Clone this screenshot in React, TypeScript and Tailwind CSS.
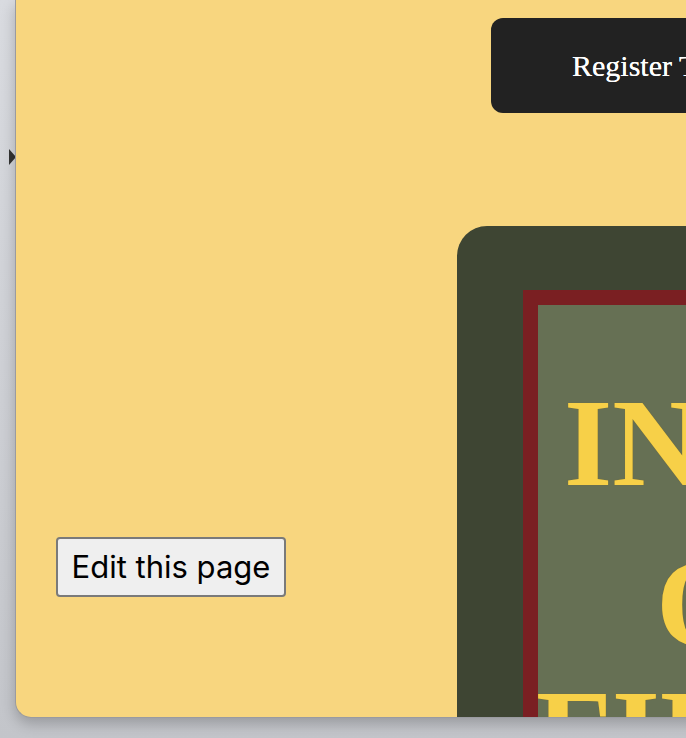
export default function App() {
  return (
    <div className="flex h-[738px] w-[686px] overflow-hidden bg-gradient-to-b from-[#d9dbe0] to-[#c3c5ca]">
      {/* left gutter with the disclosure arrow */}
      <div className="w-[15px] shrink-0 pt-[149px] pl-[9px]">
        <div className="h-0 w-0 border-y-[8px] border-l-[7px] border-y-transparent border-l-[#333]" />
      </div>

      {/* window */}
      <div className="flex h-[718px] w-[1000px] shrink-0 overflow-hidden rounded-bl-[16px] border-b border-l border-[#9a9ba0] bg-[#f8d67f] shadow-[0_6px_14px_rgba(0,0,0,0.22)]">
        {/* left column */}
        <div className="flex w-[441px] shrink-0 flex-col pl-[40px] pt-[537px]">
          <button className="h-[60px] w-[230px] rounded-[4px] border-2 border-[#7a7a7a] bg-[#efefef] font-['Inter',sans-serif] text-[31px] text-black">
            Edit this page
          </button>
        </div>

        {/* right column */}
        <div className="flex w-[560px] shrink-0 flex-col">
          <div className="ml-[34px] mt-[18px] flex h-[95px] w-[420px] shrink-0 items-center rounded-[12px] bg-[#222222] pl-[81px]">
            <span className="font-['Liberation_Serif',serif] text-[30px] text-white [text-shadow:0_0_0.5px_#fff]">Register Today</span>
          </div>

          <div className="mt-[113px] h-[560px] w-[520px] shrink-0 rounded-tl-[30px] rounded-tr-[30px] bg-[#3e4533] pl-[66px] pt-[64px]">
            <div className="h-full border-l-[15px] border-t-[15px] border-[#7a1f22] bg-[#667054]">
              <div className="flex flex-col font-['Liberation_Serif',serif] font-bold text-[#f7d048] [text-shadow:0_0_1px_#7a6a2a]">
                <span className="ml-[26px] mt-[77px] text-[124px] leading-none">INTRODUCTION</span>
                <span className="ml-[118px] mt-[37px] text-[124px] leading-none">OF</span>
                <span className="ml-[-2px] mt-[6px] text-[124px] leading-none">FIREARMS</span>
              </div>
            </div>
          </div>
        </div>
      </div>
    </div>
  );
}
